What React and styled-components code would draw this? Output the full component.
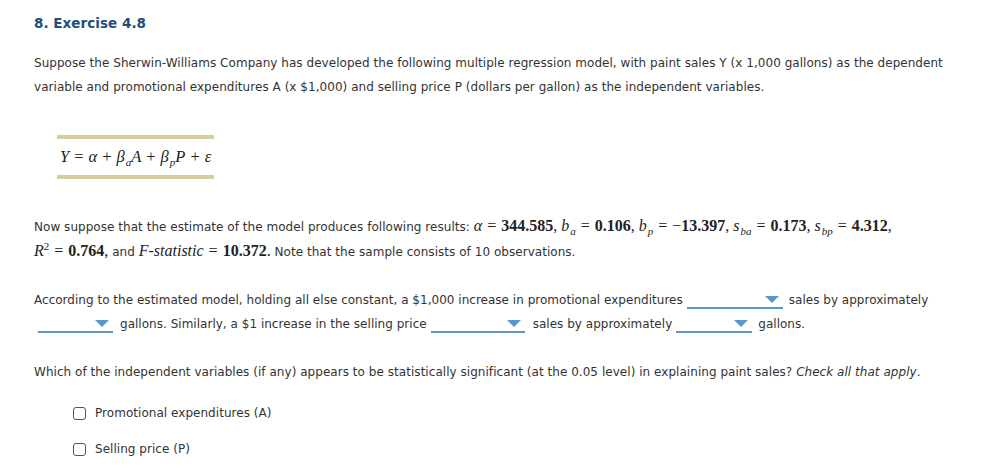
import React from 'react';
import styled, { createGlobalStyle } from 'styled-components';

const GlobalStyle = createGlobalStyle`
    body {
        margin: 0;
        background: #fff;
        font-family: "DejaVu Sans", Verdana, sans-serif;
        color: #333;
    }
`;

const Page = styled.div`
    padding: 14px 34px 0 34px;
    font-size: 12px;
    line-height: 24px;
    letter-spacing: 0.04px;
`;

const Heading = styled.h2`
    margin: 0;
    font-size: 13.5px;
    line-height: 18px;
    font-weight: bold;
    color: #1d4f7c;
`;

const Para = styled.p`
    margin: ${p => p.$top || 0}px 0 0 0;
    white-space: nowrap;
    letter-spacing: ${p => p.$ls ?? 0.04}px;
`;

const FormulaBox = styled.div`
    margin: 36px 0 0 23px;
    width: 154px;
    height: 36px;
    padding-left: 3px;
    border-top: 4px solid #d8cc9f;
    border-bottom: 4px solid #d8cc9f;
    display: flex;
    align-items: center;
`;

const Math = styled.span`
    font-family: "Liberation Serif", "DejaVu Serif", serif;
    font-size: ${p => p.$size || 16}px;
    letter-spacing: 0;
    color: #222;
    white-space: nowrap;
`;

const V = styled.i`
    font-style: italic;
`;

const B = styled.b`
    font-weight: bold;
`;

const Op = styled.span`
    padding: 0 5px;
`;

const Sub = styled.sub`
    font-size: 11px;
    font-style: italic;
    vertical-align: -4px;
    line-height: 0;
    margin-left: 1px;
`;

const Sup = styled.sup`
    font-size: 11px;
    vertical-align: 6px;
    line-height: 0;
`;

const Select = styled.span`
    display: inline-flex;
    justify-content: flex-end;
    align-items: center;
    box-sizing: border-box;
    width: ${p => p.$w}px;
    height: 17px;
    margin: 0 ${p => p.$mr ?? 6}px 0 ${p => p.$ml ?? 4}px;
    padding-right: 4px;
    border-bottom: 2px solid #5b97cb;
    vertical-align: middle;
`;

const Caret = styled.span`
    width: 0;
    height: 0;
    border-left: 7px solid transparent;
    border-right: 7px solid transparent;
    border-top: 7px solid #5b97cb;
`;

const Options = styled.div`
    margin-top: 17px;
    padding-left: 39px;
    display: flex;
    flex-direction: column;
    gap: 12px;
`;

const Option = styled.label`
    display: flex;
    align-items: center;
    gap: 9px;
    height: 24px;
`;

const Box = styled.span`
    box-sizing: border-box;
    width: 13px;
    height: 13px;
    border: 1px solid #555;
    border-radius: 3px;
    background: #fff;
`;

const Dropdown = ({ w, ml, mr }) => (
    <Select $w={w} $ml={ml} $mr={mr}><Caret /></Select>
);

export default function App() {
    return (
        <Page>
            <GlobalStyle />
            <Heading>8. Exercise 4.8</Heading>
            <Para $top={19}>
                Suppose the Sherwin-Williams Company has developed the following multiple regression model, with paint sales Y (x 1,000 gallons) as the dependent
                <br />
                variable and promotional expenditures A (x $1,000) and selling price P (dollars per gallon) as the independent variables.
            </Para>
            <FormulaBox>
                <Math $size={16.5}>
                    <V>Y</V><Op>=</Op><V>α</V><Op>+</Op><V>β</V><Sub>a</Sub><V>A</V><Op>+</Op><V>β</V><Sub>p</Sub><V>P</V><Op>+</Op><V>ε</V>
                </Math>
            </FormulaBox>
            <Para $top={35}>
                Now suppose that the estimate of the model produces following results:{' '}
                <Math><V>α</V><Op>=</Op><B>344.585</B>, <V>b</V><Sub>a</Sub><Op>=</Op><B>0.106</B>, <V>b</V><Sub>p</Sub><Op>=</Op>−<B>13.397</B>, <V>s</V><Sub>ba</Sub><Op>=</Op><B>0.173</B>, <V>s</V><Sub>bp</Sub><Op>=</Op><B>4.312</B>,</Math>
                <br />
                <Math><V>R</V><Sup>2</Sup><Op>=</Op><B>0.764</B>,</Math> and <Math><V>F</V>-<V>statistic</V><Op>=</Op><B>10.372</B>.</Math> Note that the sample consists of 10 observations.
            </Para>
            <Para $top={24} $ls={0.02}>
                According to the estimated model, holding all else constant, a $1,000 increase in promotional expenditures
                <Dropdown w={96} />
                sales by approximately
                <br />
                <Dropdown w={75} ml={4} mr={7} />
                gallons. Similarly, a $1 increase in the selling price
                <Dropdown w={94} mr={8} />
                sales by approximately
                <Dropdown w={76} />
                gallons.
            </Para>
            <Para $top={24}>
                Which of the independent variables (if any) appears to be statistically significant (at the 0.05 level) in explaining paint sales? <i>Check all that apply</i>.
            </Para>
            <Options>
                <Option><Box />Promotional expenditures (A)</Option>
                <Option><Box />Selling price (P)</Option>
            </Options>
        </Page>
    );
}
